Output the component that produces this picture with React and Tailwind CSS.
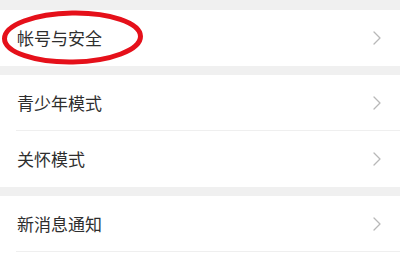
import React from "react";

function Chevron() {
  return (
    <svg width="8" height="14" viewBox="0 0 8 14" className="shrink-0">
      <path d="M1 1 L7 7 L1 13" fill="none" stroke="#b8b8b8" strokeWidth="1.3" strokeLinecap="round" strokeLinejoin="round" />
    </svg>
  );
}

function Row({ label, divider }) {
  return (
    <div className="relative flex h-[56px] items-center justify-between bg-white pl-[17px] pr-[19px]">
      <span className="text-[17px] text-[#2e2e2e]" style={{ fontFamily: '"Noto Sans CJK SC", "Noto Sans", sans-serif' }}>
        {label}
      </span>
      <Chevron />
      {divider && <div className="absolute bottom-0 left-[16px] right-0 h-px bg-[#efefef]" />}
    </div>
  );
}

export default function App() {
  return (
    <div className="relative h-[260px] w-[400px] overflow-hidden bg-[#f0f0f0]">
      <div className="h-[10px]" />
      <Row label="帐号与安全" />
      <div className="h-[9px]" />
      <Row label="青少年模式" divider />
      <Row label="关怀模式" />
      <div className="h-[9px]" />
      <Row label="新消息通知" divider />
      <div className="h-[20px] bg-white" />
      <svg className="pointer-events-none absolute left-0 top-0" width="160" height="70" viewBox="0 0 160 70">
        <ellipse cx="72.5" cy="37.5" rx="68" ry="24.5" fill="none" stroke="#e5101a" strokeWidth="5" transform="rotate(-1 72.5 37.5)" />
      </svg>
    </div>
  );
}
